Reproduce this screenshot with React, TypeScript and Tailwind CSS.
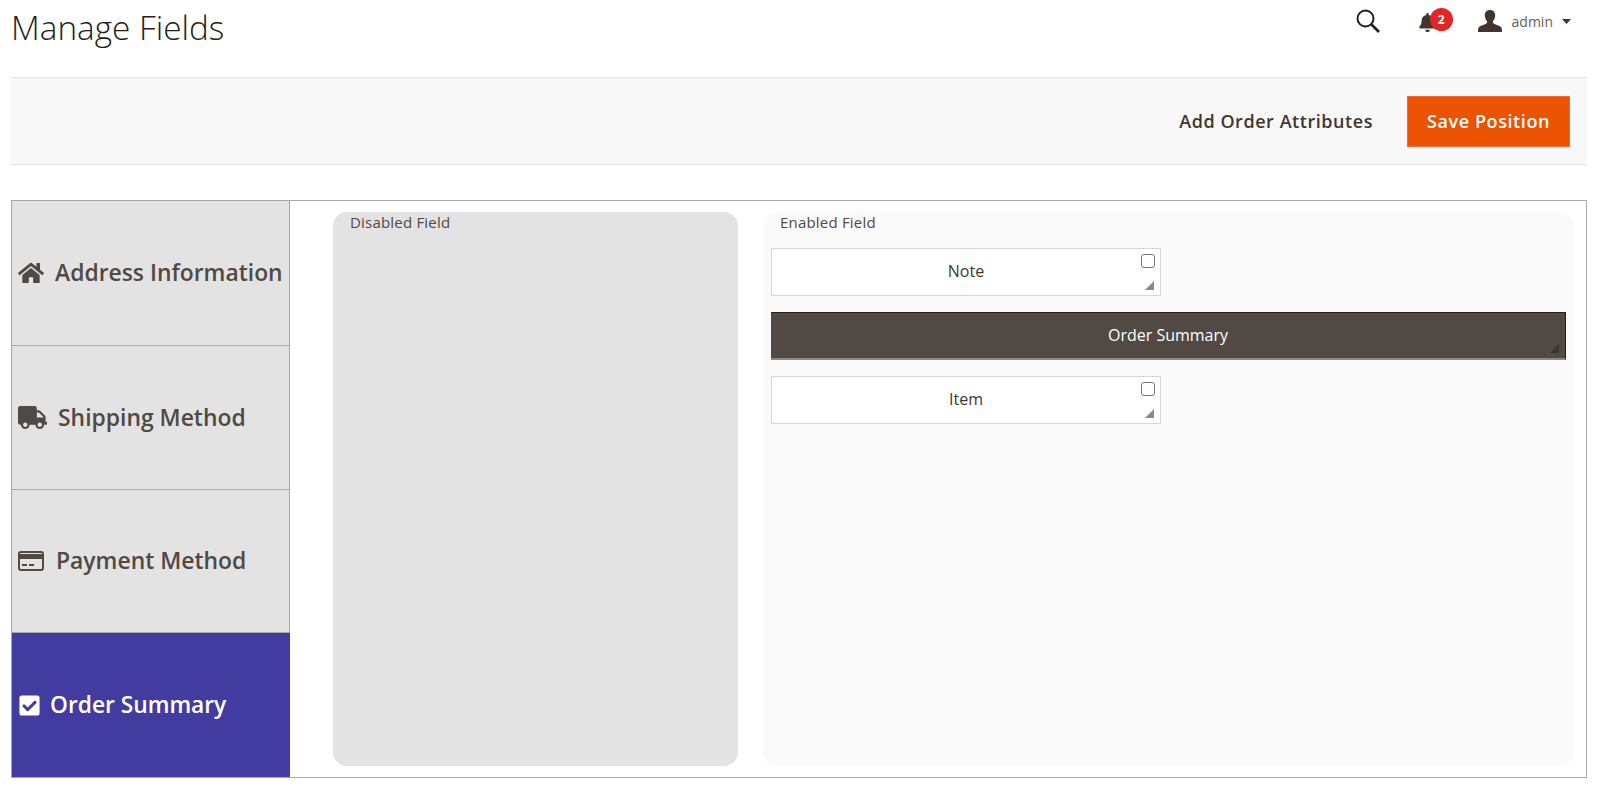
import { FaBell, FaCheckSquare, FaHome, FaTruck } from "react-icons/fa";
import type { ReactNode } from "react";

function CardIcon() {
  return (
    <svg width="26" height="20" viewBox="0 0 26 20" className="shrink-0">
      <rect x="1" y="1" width="24" height="18" rx="2" fill="none" stroke="#514943" strokeWidth="2" />
      <rect x="1" y="3" width="24" height="5" fill="#514943" />
      <rect x="4" y="13" width="5" height="2" fill="#514943" />
      <rect x="11" y="13" width="5" height="2" fill="#514943" />
    </svg>
  );
}

const tabs: { label: string; icon: ReactNode; box: string; active?: boolean }[] = [
  { label: "Address Information", icon: <FaHome size={26} />, box: "h-[145px] gap-[11px]" },
  { label: "Shipping Method", icon: <FaTruck size={29} />, box: "h-[144px] gap-[11px]" },
  { label: "Payment Method", icon: <CardIcon />, box: "h-[143px] gap-[12px]" },
  { label: "Order Summary", icon: <FaCheckSquare size={23} />, box: "h-[144px] gap-[9px]", active: true },
];

function Grip({ color }: { color: string }) {
  return (
    <svg width="9" height="9" viewBox="0 0 9 9" className="absolute right-[6px] bottom-[5px]">
      <path d="M9 0V9H0Z" fill={color} />
    </svg>
  );
}

function FieldCard({ label }: { label: string }) {
  return (
    <div className="relative flex h-[48px] w-[390px] items-center justify-center border border-[#d6d6d6] bg-white pb-[2px] text-[16px] text-[#41362f]">
      {label}
      <span className="absolute top-[5px] right-[5px] h-[14px] w-[14px] rounded-[3px] border border-[#767676] bg-white" />
      <Grip color="#8a8a8a" />
    </div>
  );
}

export default function App() {
  return (
    <div className="min-h-[790px] bg-white pr-[13px] pl-[11px] font-['Open_Sans',sans-serif] text-[#41362f]">
      {/* Page title and admin actions */}
      <header className="flex h-[77px] items-start justify-between">
        <h1 className="mt-[6px] text-[33.3px] leading-[42px] font-light text-[#231f20]">Manage Fields</h1>
        <div className="mt-[8px] flex items-center pr-[16px]">
          <svg width="26" height="26" viewBox="0 0 26 26" fill="none" stroke="#231f20" className="mr-[37px]">
            <circle cx="10.5" cy="10.5" r="8" strokeWidth="2" />
            <path d="M16.5 16.5 24 24" strokeWidth="2.6" />
          </svg>
          <div className="relative mr-[37px] h-[26px] w-[23px]">
            <FaBell size={19} className="absolute top-[5px] left-0 text-[#41362f]" />
            <span className="absolute top-0 left-[12px] flex h-[23px] w-[23px] items-center justify-center rounded-full bg-[#e22626] text-[12px] font-bold text-white">
              2
            </span>
          </div>
          <svg width="24" height="22" viewBox="0 0 24 22" fill="#41362f" className="mr-[10px]">
            <path d="M12 0c3.4 0 5.4 2.4 5.2 5.600-.1 2.400-1 4.500-2.400 6 0 1.400.6 2 2.200 2.700 2.400 1 5.600 1.800 6.500 3.400.4.8.5 2.300.5 4.300H0c0-2 .1-3.500.5-4.300.9-1.600 4.100-2.400 6.500-3.400 1.600-.7 2.200-1.300 2.200-2.700-1.400-1.500-2.300-3.600-2.400-6C6.600 2.400 8.600 0 12 0Z" />
          </svg>
          <span className="text-[14px] text-[#676056]">admin</span>
          <svg width="9" height="5" viewBox="0 0 9 5" fill="#41362f" className="ml-[9px]">
            <path d="M0 0h9L4.500 5Z" />
          </svg>
        </div>
      </header>

      {/* Action bar */}
      <div className="flex h-[88px] items-center justify-end border-y border-[#e3e3e3] bg-[#f8f8f8] pr-[17px]">
        <span className="mr-[34px] text-[18px] font-semibold tracking-[0.55px] text-[#41362f]">Add Order Attributes</span>
        <button className="h-[51px] w-[163px] border border-[#f16b3a] bg-[#eb5202] text-[18px] font-semibold tracking-[0.6px] text-white">
          Save Position
        </button>
      </div>

      {/* Tabs and field columns */}
      <div className="mt-[35px] flex h-[578px] border border-[#a8a8a8]">
        <aside className="flex w-[278px] shrink-0 flex-col">
          {tabs.map((tab) => (
            <div
              key={tab.label}
              className={
                tab.active
                  ? "flex items-center bg-[#433ca0] pl-[6px] text-[22.75px] font-semibold text-white " + tab.box
                  : "flex items-center border-r border-b border-[#a8a8a8] bg-[#e3e3e3] pl-[6px] text-[22.9px] font-semibold text-[#514943] " + tab.box
              }
            >
              {tab.icon}
              <span className={tab.active ? "whitespace-nowrap" : "mt-[1px] whitespace-nowrap"}>{tab.label}</span>
            </div>
          ))}
        </aside>

        <div className="flex flex-1 gap-[25px] pt-[11px] pr-[12px] pb-[11px] pl-[43px]">
          <section className="w-[405px] shrink-0 rounded-[14px] bg-[#e3e3e3] pl-[17px]">
            <h2 className="mt-[1px] text-[15px] leading-[18px] font-medium tracking-[0.2px] text-[#514943]">Disabled Field</h2>
          </section>
          <section className="flex-1 rounded-[14px] bg-[#fafafa] pr-[8px] pl-[8px]">
            <h2 className="mt-[1px] pl-[9px] text-[15px] leading-[18px] font-medium tracking-[0.2px] text-[#514943]">Enabled Field</h2>
            <div className="mt-[17px] flex flex-col gap-[16px]">
              <FieldCard label="Note" />
              <div className="relative flex h-[48px] items-center justify-center border-t border-r border-[#2c1c14] border-b-2 border-b-[#8f8a86] bg-[#514943] pb-[2px] text-[16px] text-white">
                Order Summary
                <Grip color="#3b3530" />
              </div>
              <FieldCard label="Item" />
            </div>
          </section>
        </div>
      </div>
    </div>
  );
}
